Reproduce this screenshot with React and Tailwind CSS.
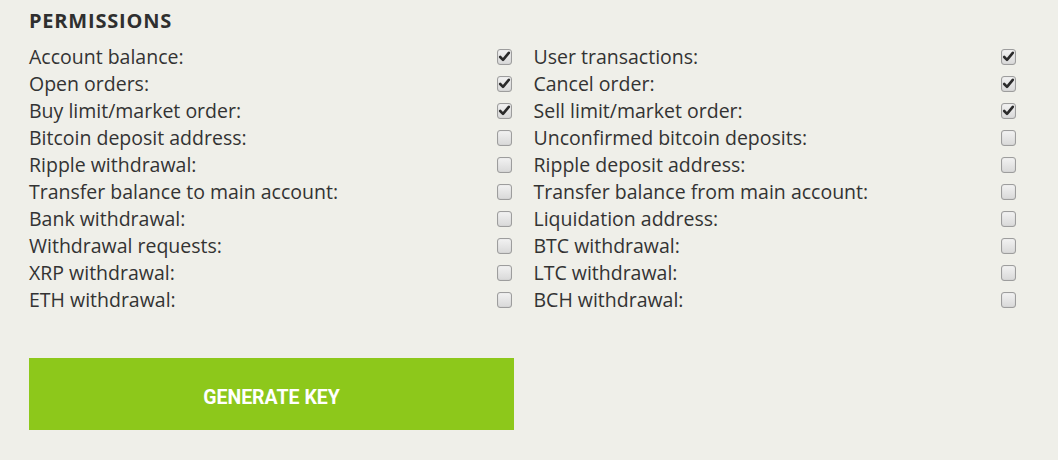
import React from "react";

const left = [
  ["Account balance:", true],
  ["Open orders:", true],
  ["Buy limit/market order:", true],
  ["Bitcoin deposit address:", false],
  ["Ripple withdrawal:", false],
  ["Transfer balance to main account:", false],
  ["Bank withdrawal:", false],
  ["Withdrawal requests:", false],
  ["XRP withdrawal:", false],
  ["ETH withdrawal:", false],
];
const right = [
  ["User transactions:", true],
  ["Cancel order:", true],
  ["Sell limit/market order:", true],
  ["Unconfirmed bitcoin deposits:", false],
  ["Ripple deposit address:", false],
  ["Transfer balance from main account:", false],
  ["Liquidation address:", false],
  ["BTC withdrawal:", false],
  ["LTC withdrawal:", false],
  ["BCH withdrawal:", false],
];

function Box({ checked }) {
  return (
    <span className="w-[15px] h-[16px] rounded-[3px] border border-[#9d9d9d] bg-gradient-to-b from-[#f2f2f2] to-[#d9d9d9] shadow-[inset_0_0_1px_rgba(0,0,0,0.2)] flex items-center justify-center">
      {checked && (
        <svg width="13" height="13" viewBox="0 0 13 13">
          <path d="M2.2 7 L5 9.8 L10.8 2.8" fill="none" stroke="#2b2b2b" strokeWidth="2.6" strokeLinecap="round" strokeLinejoin="round" />
        </svg>
      )}
    </span>
  );
}

function Col({ items }) {
  return (
    <div className="flex flex-col">
      {items.map(([label, checked]) => (
        <div key={label} className="flex items-center justify-between h-[27px]">
          <span className="leading-[27px]">{label}</span>
          <Box checked={checked} />
        </div>
      ))}
    </div>
  );
}

export default function App() {
  return (
    <div className="w-[1058px] h-[460px] bg-[#efefe9] text-[#333333] font-['Open_Sans',sans-serif] pl-[29px] pr-[42px] pt-[9px]">
      <h2 className="text-[20px] font-bold tracking-[0.04em] leading-[24px] text-[#2f2f2f]">PERMISSIONS</h2>
      <div className="grid grid-cols-2 gap-[22px] text-[19.5px] mt-[10px]">
        <Col items={left} />
        <Col items={right} />
      </div>
      <button className="mt-[45px] w-[485px] h-[72px] bg-[#8dc81b] text-white font-['Roboto',sans-serif] font-bold text-[19.5px] flex items-center justify-center pt-[7px]">
        GENERATE KEY
      </button>
    </div>
  );
}
